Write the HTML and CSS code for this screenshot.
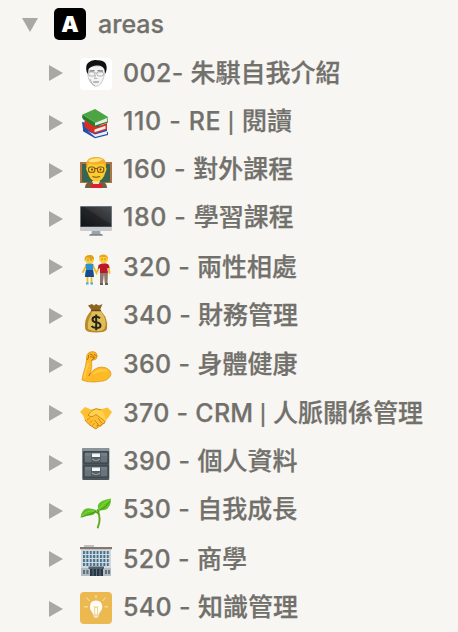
FILE: index.html
```html
<!DOCTYPE html>
<html lang="zh-Hant">
<head>
<meta charset="utf-8">
<title>areas</title>
<link rel="stylesheet" href="styles.css">
</head>
<body>
<nav class="sidebar">
  <div class="head">
    <svg class="arrow" viewBox="0 0 16 14"><path d="M0 0H16L8 14Z"/></svg>
    <span class="letter">A</span>
    <span class="title">areas</span>
  </div>
  <ul class="tree">
    <li><svg class="arrow" viewBox="0 0 14 16"><path d="M0 0L14 8L0 16Z"/></svg>
      <svg class="icon" viewBox="0 0 32 32"><rect width="32" height="32" rx="4" fill="#fff"/><path d="M7.500 11Q7.500 21 11 25Q16 31 20.500 26Q24.500 21 25 11L22 8H10Z" fill="#f4f4f4" stroke="#b5b5b5" stroke-width=".7"/><path d="M6.700 14Q5 7 8.500 4.500Q12 1 18 2.300Q26 2 26.700 9Q27 12 25.300 16L24.400 11.500Q22.500 7.500 18 7.500Q12 7 8.600 11L8 16Z" fill="#111"/><path d="M9.500 13L14.500 12.800M17.500 12.800L23 13" stroke="#444" stroke-width=".9"/><g fill="none" stroke="#8a8a8a" stroke-width=".6"><rect x="8.700" y="14" width="6" height="4" rx="1.700"/><rect x="17" y="14" width="6.500" height="4" rx="1.700"/><path d="M14.700 15H17M15.500 17L14.500 20.500H17.500M13 24Q16 22.800 19 24Q16 25.500 13 24M10 21Q11 26 15 28"/></g></svg>
      <span class="label"><span class="code">002- </span>朱騏自我介紹</span></li>
    <li><svg class="arrow" viewBox="0 0 14 16"><path d="M0 0L14 8L0 16Z"/></svg>
      <svg class="icon" viewBox="0 0 32 32"><path d="M3 20L15 29.700L28 24.700V28L15 31.200L3 24.300Z" fill="#254eac"/><path d="M15 27.500L27 23.500V27L15 30Z" fill="#eee"/><path d="M2 15L18 18L27 20V24L15 27.500L3 22Z" fill="#2451a9"/><path d="M4.500 13L17 20L27 16V22.500L14 26.700L4.500 20Z" fill="#df2c22"/><path d="M14.500 22.400L25.500 18.700V21.800L14.500 25.200Z" fill="#eee"/><path d="M2.500 7.500L15.500 15.700L28 11V15.500L15 20L3 12.300Q1.400 9.500 2.500 7.500Z" fill="#267e2b"/><path d="M15 15.600L27.400 11V14.400L15 18.500Z" fill="#eaeae5"/><path d="M2.500 7.500L15 2L28.500 10.200L15.500 15.700Z" fill="#4ca442"/></svg>
      <span class="label"><span class="code">110 - RE <span class="bar">|</span> </span>閱讀</span></li>
    <li><svg class="arrow" viewBox="0 0 14 16"><path d="M0 0L14 8L0 16Z"/></svg>
      <svg class="icon" viewBox="0 0 32 32"><path d="M0 6H32V27H0Z" fill="#ae7345"/><path d="M2 8H30V26H2Z" fill="#386450"/><path d="M5 32Q5 26.500 10 25.500H22Q27 26.500 27 32Z" fill="#71613e"/><path d="M12 25H20L18 30H14Z" fill="#f2e3b8"/><path d="M11 28H22V32H11Z" fill="#d8242b"/><path d="M7 11Q7 1 16 1Q25.500 1 25.500 11Q27.500 12 25.500 16Q23 25.500 16.500 25.500Q10 25.500 7.500 16Q5 12 7 11Z" fill="#ffca2c"/><path d="M6.500 12Q4.500 1 16 1Q28 1 25.800 12L23.500 8Q14 9 9 7.500Z" fill="#f0b02c"/><path d="M8 5Q13 1 23 3Q18 7 10 6Z" fill="#ffe381"/><g fill="none" stroke="#765219" stroke-width="1.100"><rect x="8.500" y="11" width="6.300" height="5.300" rx="2"/><rect x="17.500" y="11" width="6.300" height="5.300" rx="2"/><path d="M14.800 12.500H17.500M12.500 20.500Q16 22 20 20.500"/></g><circle cx="12" cy="13.500" r="1" fill="#53350f"/><circle cx="20.500" cy="13.500" r="1" fill="#53350f"/></svg>
      <span class="label"><span class="code">160 - </span>對外課程</span></li>
    <li><svg class="arrow" viewBox="0 0 14 16"><path d="M0 0L14 8L0 16Z"/></svg>
      <svg class="icon" viewBox="0 0 32 32"><defs><linearGradient id="screen" x1="0" y1="1" x2="1" y2="0"><stop offset="0" stop-color="#111214"/><stop offset=".55" stop-color="#242629"/><stop offset=".56" stop-color="#313336"/><stop offset="1" stop-color="#4c4f53"/></linearGradient></defs><path d="M12 24H20L20.500 29H11.500Z" fill="#9da5ac"/><path d="M10 29H22L23 30.800H9Z" fill="#7c8791"/><rect y="1" width="32" height="25" rx="1.200" fill="#c9cdd1"/><path d="M0 2Q0 1 1 1H31Q32 1 32 2V22H0Z" fill="#68747e"/><path d="M1 2H31V21.500H1Z" fill="url(#screen)"/></svg>
      <span class="label"><span class="code">180 - </span>學習課程</span></li>
    <li><svg class="arrow" viewBox="0 0 14 16"><path d="M0 0L14 8L0 16Z"/></svg>
      <svg class="icon" viewBox="0 0 32 32"><g fill="none" stroke="#f3b92b" stroke-width="1.800" stroke-linecap="round"><path d="M6 12L3 18M13 12L16.500 19L19.500 12M28.500 12L29.500 19M7.500 21V29M11.500 21V29"/></g><path d="M5.500 10Q9.500 8.500 13.500 10L13 15L14 23H5L6 15Z" fill="#2e91d0"/><path d="M6 16H13L14 23H5Z" fill="#164b8d"/><path d="M5 6Q4.500 1 9.500 1Q14.500 1 14 6Q13.500 9.500 9.500 9.500Q5.500 9.500 5 6Z" fill="#ffcc34"/><path d="M4.500 7Q4 1 10 1Q14 1 14 5.500Q10 5 7 3.500Z" fill="#dca11f"/><path d="M6 29.500H8.500M10.500 29.500H13" stroke="#36afe0" stroke-width="2"/><path d="M20 17H28L27.500 29H24.800L24 20L22.800 29H20Z" fill="#91786b"/><path d="M18.500 11Q23.500 8 28.500 10.500L29.500 14L27.500 14V19H20V14L18 15Z" fill="#ba172a"/><circle cx="23.600" cy="5" r="4.400" fill="#ffcb31"/><path d="M19 4Q19 .5 23 .8Q28 .5 28 5L26 3H20Z" fill="#e5a629"/><path d="M20 30H23M25 30H28" stroke="#302b29" stroke-width="1.500"/><g fill="#694618"><circle cx="8" cy="5.800" r=".6"/><circle cx="11" cy="5.800" r=".6"/><circle cx="22" cy="5" r=".6"/><circle cx="25" cy="5" r=".6"/></g></svg>
      <span class="label"><span class="code">320 - </span>兩性相處</span></li>
    <li><svg class="arrow" viewBox="0 0 14 16"><path d="M0 0L14 8L0 16Z"/></svg>
      <svg class="icon" viewBox="0 0 32 32"><path d="M11.500 8L8 3.500L12 2L14 3.500L16 2L19 3.500L22.500 2L20 8Z" fill="#8c6426"/><path d="M11.500 8H20.500L25.500 15Q28 21 27 27Q26 30.500 16 30.500Q6 30.500 5.200 27Q4 18 8.500 12Z" fill="#b98a2a"/><path d="M12 8.500H20Q25 14 25.500 20Q26 27 22 28.500Q13 30 8 27Q7 19 11 13Z" fill="#dfbd59"/><path d="M11 8.500H21" stroke="#704616" stroke-width="1.500"/><path d="M20 16.200Q18.500 14.800 16 14.800Q12.500 14.800 12.500 17.500Q12.500 19.700 16 20.300Q20.500 21 20.500 23.500Q20.500 26 16.200 26Q13 26 11.500 24.200M16.200 12.500V28.300" fill="none" stroke="#272519" stroke-width="2"/></svg>
      <span class="label"><span class="code">340 - </span>財務管理</span></li>
    <li><svg class="arrow" viewBox="0 0 14 16"><path d="M0 0L14 8L0 16Z"/></svg>
      <svg class="icon" viewBox="0 0 32 32"><path d="M2 29Q2.500 24 5.500 15L6.500 9Q6 3 9.500 1.200Q13.500-.2 16 1.800Q18.400 5 16.200 8L11.500 9.700Q12.500 15 10.500 22Q17 14.500 25 16.500Q31 18.500 31 23.500Q29 30 19 30.500Q9 32 2 29Z" fill="#feba26" stroke="#d69419" stroke-width=".7"/><path d="M4.500 27Q5 21 8.500 12M13 23Q20 17.500 27 20" fill="none" stroke="#ffcb43" stroke-width="2"/><path d="M7 9Q9 7 8.500 4M9.500 3Q12.500 3 15 6.500L11.500 9.600M10.300 22L8.800 25M14 3L17 5.500M10 5.500L14 6.500" fill="none" stroke="#b86c12" stroke-width="1"/></svg>
      <span class="label"><span class="code">360 - </span>身體健康</span></li>
    <li><svg class="arrow" viewBox="0 0 14 16"><path d="M0 0L14 8L0 16Z"/></svg>
      <svg class="icon" viewBox="0 0 32 32"><path d="M0 12L5 7L11 9.500L16 8.500L22 9L27.500 7.500L32 12Q29 17 25.500 21L22 26L15.500 29L9 24.500L4.500 20Q4 15 0 12Z" fill="#fec031"/><path d="M8 15Q12 7.500 17 9Q24 9 26 20L22 21L16.500 15L13 17Z" fill="#ffd14c"/><path d="M8 15Q11.500 9.500 16 8.700L21 10M8 15Q11.500 18.500 16 14.500L24.500 21M14.500 20L19 25.500M18 18L22 23.500M5 20L9 24.500L16 29Q18.500 28 17 25Q21 27 22 24Q25.500 24 25 21" fill="none" stroke="#c88214" stroke-width=".9" stroke-linejoin="round"/><path d="M7 20L10 18M9.500 23L12.500 20.500M12.500 25.500L14.700 23" stroke="#d58e16"/></svg>
      <span class="label"><span class="code">370 - CRM <span class="bar">|</span> </span>人脈關係管理</span></li>
    <li><svg class="arrow" viewBox="0 0 14 16"><path d="M0 0L14 8L0 16Z"/></svg>
      <svg class="icon" viewBox="0 0 32 32"><rect x="2.300" width="27" height="32" rx="1" fill="#4d565e"/><path d="M2.500 1Q2.500 0 4 0H28Q29 0 29 1V3H2.500Z" fill="#8b949b"/><path d="M4 4H28V15H4ZM4 18H28V29H4Z" fill="#68737b" stroke="#333c43"/><path d="M5 5H27V8H5ZM5 19H27V22H5Z" fill="#747e85"/><path d="M11 5.500H21V14H11ZM11 19.500H21V28H11Z" fill="#535d64"/><path d="M12 5.500H20V9H12ZM12 19.500H20V23H12Z" fill="#f5f5f5"/><path d="M12 11Q16 14 20 11M12 25Q16 28 20 25" fill="none" stroke="#939ba0" stroke-width="1.200"/></svg>
      <span class="label"><span class="code">390 - </span>個人資料</span></li>
    <li><svg class="arrow" viewBox="0 0 14 16"><path d="M0 0L14 8L0 16Z"/></svg>
      <svg class="icon" viewBox="0 0 32 32"><path d="M17.500 13Q21.500 22 17.800 30.500" fill="none" stroke="#60a91d" stroke-width="1.900" stroke-linecap="round"/><path d="M14 13L18 16.500L19.500 12" fill="none" stroke="#55a01a" stroke-width="1.300"/><path d="M.5 21Q2 10 10 11.500Q15 12 17 14Q14 19 8 18.500Q4 18 .5 21Z" fill="#5fbd25"/><path d="M19 13.500Q15.500 7.500 22 4Q26 2 31 1.500Q31 11.500 24.500 13Z" fill="#63c324"/><path d="M2 19Q7 13 14 14M20 11Q24 5 30 3" fill="none" stroke="#98dc4c" stroke-width=".8"/><path d="M2 20Q9 18 16 14.500M20 13Q26 11 30 4" fill="none" stroke="#318d19" stroke-width=".8"/></svg>
      <span class="label"><span class="code">530 - </span>自我成長</span></li>
    <li><svg class="arrow" viewBox="0 0 14 16"><path d="M0 0L14 8L0 16Z"/></svg>
      <svg class="icon" viewBox="0 0 32 32"><defs><pattern id="panes" x="3" y="6" width="3.400" height="4" patternUnits="userSpaceOnUse"><rect width="2" height="3" fill="#3e7290"/></pattern></defs><path d="M4 0H14V3H4Z" fill="#bfc1c2"/><path d="M1 3H31V31H1Z" fill="#d6d9dc"/><path d="M0 2H32V4.200H0Z" fill="#85766f"/><path d="M3 6H30V22H3Z" fill="url(#panes)"/><path d="M1 23H31V31H1Z" fill="#b3bac0"/><path d="M8.500 21.500H24V24H8.500Z" fill="#555e68"/><path d="M10 24H23V31H10Z" fill="#253847"/><path d="M13 24V31M16.500 24V31M20 24V31" stroke="#78838b" stroke-width=".8"/><path d="M3 25H5V29H3ZM6.400 25H8.400V29H6.400ZM25 25H27V29H25ZM28 25H30V29H28Z" fill="#5b7180"/></svg>
      <span class="label"><span class="code">520 - </span>商學</span></li>
    <li><svg class="arrow" viewBox="0 0 14 16"><path d="M0 0L14 8L0 16Z"/></svg>
      <svg class="icon" viewBox="0 0 32 32"><rect width="32" height="32" rx="4" fill="#ecb951"/><path d="M16 8.500Q22 8.500 22.300 14.500Q22.500 17 20.500 19.500Q19 21 19 22.500H13Q13 21 11.500 19.500Q9.500 17 10 14.500Q10 8.500 16 8.500Z" fill="#fffdf6"/><path d="M13 22.500H19V24.500H13Z" fill="#ded8ca"/><path d="M14 24.500H18V25.500H14Z" fill="#fff"/><path d="M13.700 14L15 16L16 14.500L17 16L18.500 14M14.700 16V22M17.500 16V22" fill="none" stroke="#efc568" stroke-width=".8"/><path d="M16 3V6.500M6.500 5.500L9.500 9M25.500 5.500L22.500 9M4 14.800H8M24.500 14.800H28" stroke="#f8e6b8" stroke-width="1"/></svg>
      <span class="label"><span class="code">540 - </span>知識管理</span></li>
  </ul>
</nav>
</body>
</html>
```
FILE: styles.css
```css
* { box-sizing: border-box; }
body {
  margin: 0;
  height: 632px;
  overflow: hidden;
  background: #f7f6f3;
  color: #72706b;
  font: 500 25px/30px Inter, "Noto Sans CJK TC", sans-serif;
}
.head {
  display: flex;
  align-items: center;
  height: 49px;
  padding-left: 22px;
}
.arrow { flex: none; fill: #a9a8a4; }
.head .arrow { width: 16px; height: 14px; margin-right: 16px; }
.letter {
  width: 32px;
  height: 32px;
  margin: 0 12px 1px 0;
  border-radius: 5px;
  background: #000;
  color: #fff;
  font: 900 22px/32px Inter, sans-serif;
  text-align: center;
}
.title { margin-bottom: 1px; }
.tree { margin: 0; padding: 0; list-style: none; }
.tree li {
  --row: 48px;
  --icon: 5px;
  --arrow: 2px;
  --track: 0.33px;
  display: flex;
  align-items: flex-start;
  height: var(--row);
  padding: 8px 0 0 49px;
  white-space: nowrap;
}
.tree .arrow { width: 14px; height: 16px; margin: calc(8px + var(--arrow)) 17px 0 0; }
.icon { flex: none; width: 32px; height: 32px; margin: calc(var(--icon) - 2px) 11px 0 0; }
.title, .label { -webkit-text-stroke: 0.25px currentColor; }
.label { margin-top: 1px; }
.code { letter-spacing: var(--track); }
.bar { margin: 0 -0.5px 0 -1px; font-size: 20px; }
.tree li:nth-child(1) { --icon: 3px; --arrow: 0px; }
.tree li:nth-child(2) { --icon: 4px; --track: 0.65px; }
.tree li:nth-child(3) { --track: 0.5px; }
.tree li:nth-child(4) { --row: 50px; --icon: 6px; --track: 0.6px; }
.tree li:nth-child(5) { --arrow: 0px; }
.tree li:nth-child(6) { --row: 49px; --arrow: 1px; }
.tree li:nth-child(7) { --row: 49px; --arrow: 1px; }
.tree li:nth-child(8) { --arrow: 0px; --track: 0.28px; }
.tree li:nth-child(10) { --row: 50px; --icon: 6px; }
.tree li:nth-child(11) { --icon: 4px; --arrow: 0px; }
.tree li:nth-child(12) { --icon: 3px; }
```
